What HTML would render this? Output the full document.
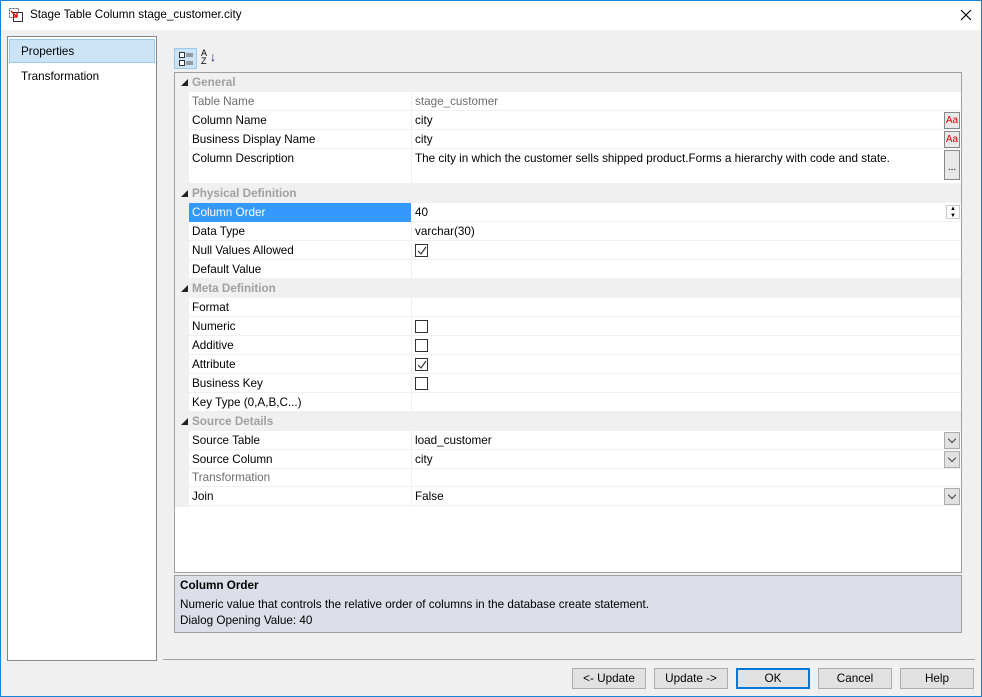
<!DOCTYPE html>
<html><head><meta charset="utf-8"><style>
*{box-sizing:border-box;margin:0;padding:0}
body{width:982px;height:697px;background:#f0f0f0;font-family:"Liberation Sans",sans-serif;font-size:11.7px;color:#000;position:relative;overflow:hidden}
.a{position:absolute}
.title{left:0;top:0;width:982px;height:30px;background:#fff}
.row{position:absolute;left:0;width:786px;height:19px;border-bottom:1px solid #f0f0f0}
.cat{background:#f0f0f0;color:#a0a0a0;font-weight:bold}
.lab{position:absolute;left:17px;top:3px}
.val{position:absolute;left:240px;top:3px}
.sep{position:absolute;left:236px;top:0;bottom:0;width:1px;background:#f0f0f0}
.tri{position:absolute;left:6px;top:6px;width:0;height:0;border-left:7px solid transparent;border-bottom:7px solid #222}
.cb{position:absolute;left:240px;top:3px;width:13px;height:13px;border:1px solid #333;background:#fff}
.dd{position:absolute;right:1px;top:1px;width:16px;height:17px;background:#e1e1e1;border:1px solid #adadad}
.dd:after{content:"";position:absolute;left:4px;top:3px;width:5px;height:5px;border-right:1px solid #444;border-bottom:1px solid #444;transform:rotate(45deg)}
.btn{position:absolute;top:668px;width:74px;height:21px;background:#e1e1e1;border:1px solid #adadad;text-align:center;line-height:19px}
.aa{position:absolute;right:1px;top:1px;width:16px;height:17px;border:1px solid #888;background:#e8e8e8;color:#d00;font-size:10px;line-height:15px;text-align:center}
</style></head><body>
<div class="a title"></div>
<svg class="a" style="left:8px;top:7px" width="16" height="16"><rect x="1.5" y="1.5" width="9" height="9" fill="none" stroke="#555" stroke-dasharray="2 1"/><rect x="5.5" y="5.5" width="9" height="9" fill="#fff" stroke="#333"/><path d="M3 4 L9 10 M9 6 V10 H5" stroke="#d00" fill="none" stroke-width="1.3"/></svg>
<div class="a" style="left:30px;top:8px">Stage Table Column stage_customer.city</div>
<svg class="a" style="left:960px;top:9px" width="12" height="12"><path d="M1 1L11 11M11 1L1 11" stroke="#000" stroke-width="1.2"/></svg>
<div class="a" style="left:7px;top:36px;width:150px;height:625px;background:#fff;border:1px solid #828790"></div>
<div class="a" style="left:9px;top:39px;width:146px;height:24px;background:#cce4f7;border:1px solid #99c9ef"></div>
<div class="a" style="left:21px;top:45px">Properties</div>
<div class="a" style="left:21px;top:70px">Transformation</div>
<div class="a" style="left:174px;top:48px;width:23px;height:21px;background:#cce4f7;border:1px solid #99c9ef"></div>
<svg class="a" style="left:178px;top:51px" width="16" height="16"><rect x="1.5" y="1.5" width="5" height="5" fill="#fff" stroke="#333"/><rect x="1.5" y="9.5" width="5" height="5" fill="#fff" stroke="#333"/><path d="M8 3h7M8 5h7M8 11h7M8 13h7" stroke="#555"/></svg>
<div class="a" style="left:201px;top:49px;font-size:9px;line-height:8px">A<br>Z</div><div class="a" style="left:210px;top:50px;color:#006;font-size:12px">↓</div>
<div class="a" style="left:174px;top:72px;width:788px;height:501px;background:#fff;border:1px solid #a0a0a0">
<div class="a" style="left:0;top:0;width:14px;height:434px;background:#f0f0f0"></div>
<div class="row cat" style="top:0"><div class="tri"></div><div class="lab">General</div></div>
<div class="row" style="top:19px;left:14px;width:772px"><div class="lab" style="left:3px;color:#6d6d6d">Table Name</div><div class="sep" style="left:222px"></div><div class="val" style="left:226px;color:#6d6d6d">stage_customer</div></div>
<div class="row" style="top:38px;left:14px;width:772px"><div class="lab" style="left:3px">Column Name</div><div class="sep" style="left:222px"></div><div class="val" style="left:226px">city</div><div class="aa">Aa</div></div>
<div class="row" style="top:57px;left:14px;width:772px"><div class="lab" style="left:3px">Business Display Name</div><div class="sep" style="left:222px"></div><div class="val" style="left:226px">city</div><div class="aa">Aa</div></div>
<div class="row" style="top:76px;left:14px;width:772px;height:35px"><div class="lab" style="left:3px">Column Description</div><div class="sep" style="left:222px"></div><div class="val" style="left:226px">The city in which the customer sells shipped product.Forms a hierarchy with code and state.</div><div class="aa" style="height:30px;color:#000;line-height:34px">...</div></div>
<div class="row cat" style="top:111px"><div class="tri"></div><div class="lab">Physical Definition</div></div>
<div class="row" style="top:130px;left:14px;width:772px"><div class="a" style="left:0;top:0;width:222px;height:19px;background:#3399ff"></div><div class="lab" style="left:3px;color:#fff">Column Order</div><div class="val" style="left:226px">40</div><div class="a" style="right:1px;top:2px;width:14px;height:14px;font-size:6px;line-height:7px;text-align:center;border:1px solid #ccc">▲<br>▼</div></div>
<div class="row" style="top:149px;left:14px;width:772px"><div class="lab" style="left:3px">Data Type</div><div class="sep" style="left:222px"></div><div class="val" style="left:226px">varchar(30)</div></div>
<div class="row" style="top:168px;left:14px;width:772px"><div class="lab" style="left:3px">Null Values Allowed</div><div class="sep" style="left:222px"></div><div class="cb" style="left:226px"><svg class="a" style="left:1px;top:1px" width="10" height="10"><path d="M1 5 L4 8 L9 1" stroke="#333" fill="none" stroke-width="1.2"/></svg></div></div>
<div class="row" style="top:187px;left:14px;width:772px"><div class="lab" style="left:3px">Default Value</div><div class="sep" style="left:222px"></div></div>
<div class="row cat" style="top:206px"><div class="tri"></div><div class="lab">Meta Definition</div></div>
<div class="row" style="top:225px;left:14px;width:772px"><div class="lab" style="left:3px">Format</div><div class="sep" style="left:222px"></div></div>
<div class="row" style="top:244px;left:14px;width:772px"><div class="lab" style="left:3px">Numeric</div><div class="sep" style="left:222px"></div><div class="cb" style="left:226px"></div></div>
<div class="row" style="top:263px;left:14px;width:772px"><div class="lab" style="left:3px">Additive</div><div class="sep" style="left:222px"></div><div class="cb" style="left:226px"></div></div>
<div class="row" style="top:282px;left:14px;width:772px"><div class="lab" style="left:3px">Attribute</div><div class="sep" style="left:222px"></div><div class="cb" style="left:226px"><svg class="a" style="left:1px;top:1px" width="10" height="10"><path d="M1 5 L4 8 L9 1" stroke="#333" fill="none" stroke-width="1.2"/></svg></div></div>
<div class="row" style="top:301px;left:14px;width:772px"><div class="lab" style="left:3px">Business Key</div><div class="sep" style="left:222px"></div><div class="cb" style="left:226px"></div></div>
<div class="row" style="top:320px;left:14px;width:772px"><div class="lab" style="left:3px">Key Type (0,A,B,C...)</div><div class="sep" style="left:222px"></div></div>
<div class="row cat" style="top:339px"><div class="tri"></div><div class="lab">Source Details</div></div>
<div class="row" style="top:358px;left:14px;width:772px"><div class="lab" style="left:3px">Source Table</div><div class="sep" style="left:222px"></div><div class="val" style="left:226px">load_customer</div><div class="dd"></div></div>
<div class="row" style="top:377px;left:14px;width:772px"><div class="lab" style="left:3px">Source Column</div><div class="sep" style="left:222px"></div><div class="val" style="left:226px">city</div><div class="dd"></div></div>
<div class="row" style="top:396px;left:14px;width:772px;height:18px"><div class="lab" style="left:3px;top:2px;color:#6d6d6d">Transformation</div><div class="sep" style="left:222px"></div></div>
<div class="row" style="top:414px;left:14px;width:772px"><div class="lab" style="left:3px">Join</div><div class="sep" style="left:222px"></div><div class="val" style="left:226px">False</div><div class="dd"></div></div>
</div>
<div class="a" style="left:174px;top:575px;width:788px;height:58px;background:#dcdfe8;border:1px solid #a0a0a0"></div>
<div class="a" style="left:180px;top:579px;font-weight:bold">Column Order</div>
<div class="a" style="left:180px;top:598px">Numeric value that controls the relative order of columns in the database create statement.</div>
<div class="a" style="left:180px;top:614px">Dialog Opening Value: 40</div>
<div class="a" style="left:163px;top:659px;width:812px;height:1px;background:#a0a0a0"></div>
<div class="btn" style="left:572px">&lt;- Update</div>
<div class="btn" style="left:654px">Update -&gt;</div>
<div class="btn" style="left:736px;border:2px solid #0078d7;line-height:17px">OK</div>
<div class="btn" style="left:818px">Cancel</div>
<div class="btn" style="left:900px">Help</div>
<div class="a" style="left:0;top:0;width:982px;height:697px;border:1px solid #1883d7"></div>
</body></html>
